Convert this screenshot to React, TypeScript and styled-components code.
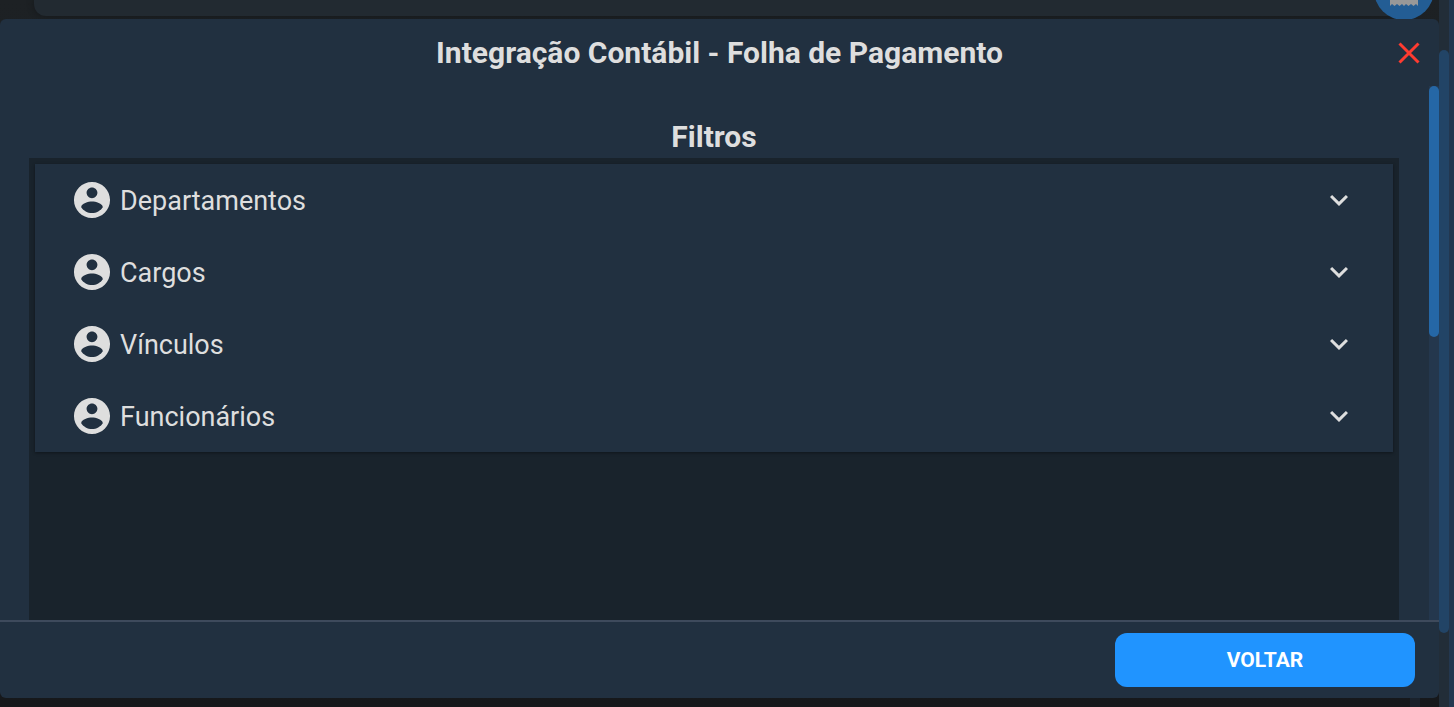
import React from 'react';
import styled, { createGlobalStyle } from 'styled-components';
import { MdExpandMore } from 'react-icons/md';

const GlobalStyle = createGlobalStyle`
  *, *::before, *::after { box-sizing: border-box; }
  body { margin: 0; background: #181a1d; font-family: Roboto, "Noto Sans", sans-serif; color: #dedede; }
  h1, h2 { margin: 0; font-size: 30px; line-height: 36px; font-weight: 700; text-align: center; }
  button { font: inherit; color: inherit; border: 0; padding: 0; background: none; cursor: pointer; }
`;

const Page = styled.div`
  display: flex;
  height: 100vh;
  overflow: hidden;
  background: #23374f;
`;

const Stage = styled.div`
  flex: 1;
  min-width: 0;
  display: flex;
  flex-direction: column;
  background: linear-gradient(#1d2124, #16181b);
`;

const Behind = styled.div`
  position: relative;
  height: 19px;
  padding: 0 34px;
  overflow: hidden;
`;

const BehindCard = styled.div`
  height: 16px;
  border-radius: 0 0 12px 12px;
  background: #222a31;
  box-shadow: 0 0 6px #15181b;
`;

const FloatingBadge = styled.div`
  position: absolute;
  right: 5px;
  bottom: -1px;
  width: 60px;
  height: 60px;
  border-radius: 50%;
  background: #235d94;
  display: flex;
  justify-content: center;
  align-items: flex-end;
  padding-bottom: 14px;
`;

const Modal = styled.section`
  flex: 1;
  min-height: 0;
  display: flex;
  flex-direction: column;
  border-radius: 6px;
  overflow: hidden;
  background: #213040;
`;

const Header = styled.header`
  position: relative;
  height: 67px;
  flex: none;
  padding-top: 16px;
`;

const CloseButton = styled.button`
  position: absolute;
  top: 20px;
  right: 16px;
  width: 28px;
  height: 28px;
  svg { display: block; }
`;

const Body = styled.div`
  flex: 1;
  min-height: 0;
  display: flex;
`;

const Content = styled.div`
  flex: 1;
  min-width: 0;
  display: flex;
  flex-direction: column;
  padding: 33px 30px 0 29px;
`;

const FilterArea = styled.div`
  flex: 1;
  margin-top: 3px;
  padding: 6px;
  background: #19232c;
`;

const FilterList = styled.div`
  background: #213040;
  box-shadow: 0 1px 3px rgba(0, 0, 0, 0.4);
`;

const FilterRow = styled.button`
  display: flex;
  align-items: center;
  gap: 6px;
  width: 100%;
  height: 72px;
  padding: 0 36px 0 35px;
  font-size: 27px;
  line-height: 32px;
  text-align: left;
  span { flex: 1; padding-top: 2px; }
`;

const Track = styled.div<{ $color: string; $start: number }>`
  width: 10px;
  flex: none;
  padding-top: ${p => p.$start}px;
  background: ${p => p.$color};
`;

const Thumb = styled.div<{ $color: string; $length: string }>`
  height: ${p => p.$length};
  border-radius: 5px;
  background: ${p => p.$color};
`;

const Footer = styled.footer`
  flex: none;
  display: flex;
  justify-content: flex-end;
  padding: 11px 24px;
  border-top: 2px solid #3e4a5c;
`;

const BackButton = styled.button`
  width: 300px;
  height: 54px;
  border-radius: 12px;
  background: #2094ff;
  color: #fff;
  font-size: 21px;
  font-weight: 700;
`;

const BottomStrip = styled.div`
  height: 9px;
  flex: none;
  display: flex;
  justify-content: flex-end;
  padding-right: 19px;
`;

const PageEdge = styled.div`
  width: 5px;
  flex: none;
`;

const AccountIcon = () => (
  <svg width="44" height="44" viewBox="-0.2 -0.2 24.4 24.4" fill="currentColor" aria-hidden="true">
    <path d="M12 2C6.48 2 2 6.48 2 12s4.48 10 10 10 10-4.48 10-10S17.52 2 12 2zm0 3c1.66 0 3 1.34 3 3s-1.34 3-3 3-3-1.34-3-3 1.34-3 3-3zm0 14.2c-2.5 0-4.71-1.28-6-3.22.03-1.99 4-3.08 6-3.08 1.99 0 5.97 1.09 6 3.08-1.29 1.94-3.5 3.22-6 3.22z" />
  </svg>
);

const filters = ['Departamentos', 'Cargos', 'Vínculos', 'Funcionários'];

export default function App() {
  return (
    <Page>
      <GlobalStyle />
      <Stage>
        <Behind>
          <BehindCard />
          <FloatingBadge>
            <svg width="28" height="24" viewBox="0 0 28 24" aria-hidden="true">
              <path d="M0 0H28V24L26 22L23.5 24L21 22L18.5 24L16 22L14 24L12 22L9.5 24L7 22L4.5 24L2 22L0 24Z" fill="#989898" />
            </svg>
          </FloatingBadge>
        </Behind>
        <Modal role="dialog" aria-labelledby="modal-title">
          <Header>
            <h1 id="modal-title">Integração Contábil - Folha de Pagamento</h1>
            <CloseButton aria-label="Fechar">
              <svg width="28" height="28" viewBox="0 0 28 28" fill="none" stroke="#ff3b30" strokeWidth="3">
                <path d="M4.5 4.5L23.5 23.5M23.5 4.5L4.5 23.5" />
              </svg>
            </CloseButton>
          </Header>
          <Body>
            <Content>
              <h2>Filtros</h2>
              <FilterArea>
                <FilterList>
                  {filters.map(name => (
                    <FilterRow key={name} aria-expanded={false}>
                      <AccountIcon />
                      <span>{name}</span>
                      <MdExpandMore size={36} />
                    </FilterRow>
                  ))}
                </FilterList>
              </FilterArea>
            </Content>
            <Track $color="#24374d" $start={0}>
              <Thumb $color="#2567a6" $length="47%" />
            </Track>
          </Body>
          <Footer>
            <BackButton>VOLTAR</BackButton>
          </Footer>
        </Modal>
        <BottomStrip>
          <Track $color="#1a222c" $start={0} />
        </BottomStrip>
      </Stage>
      <Track $color="#222d38" $start={50}>
        <Thumb $color="#224466" $length="calc(100% - 74px)" />
      </Track>
      <PageEdge />
    </Page>
  );
}
